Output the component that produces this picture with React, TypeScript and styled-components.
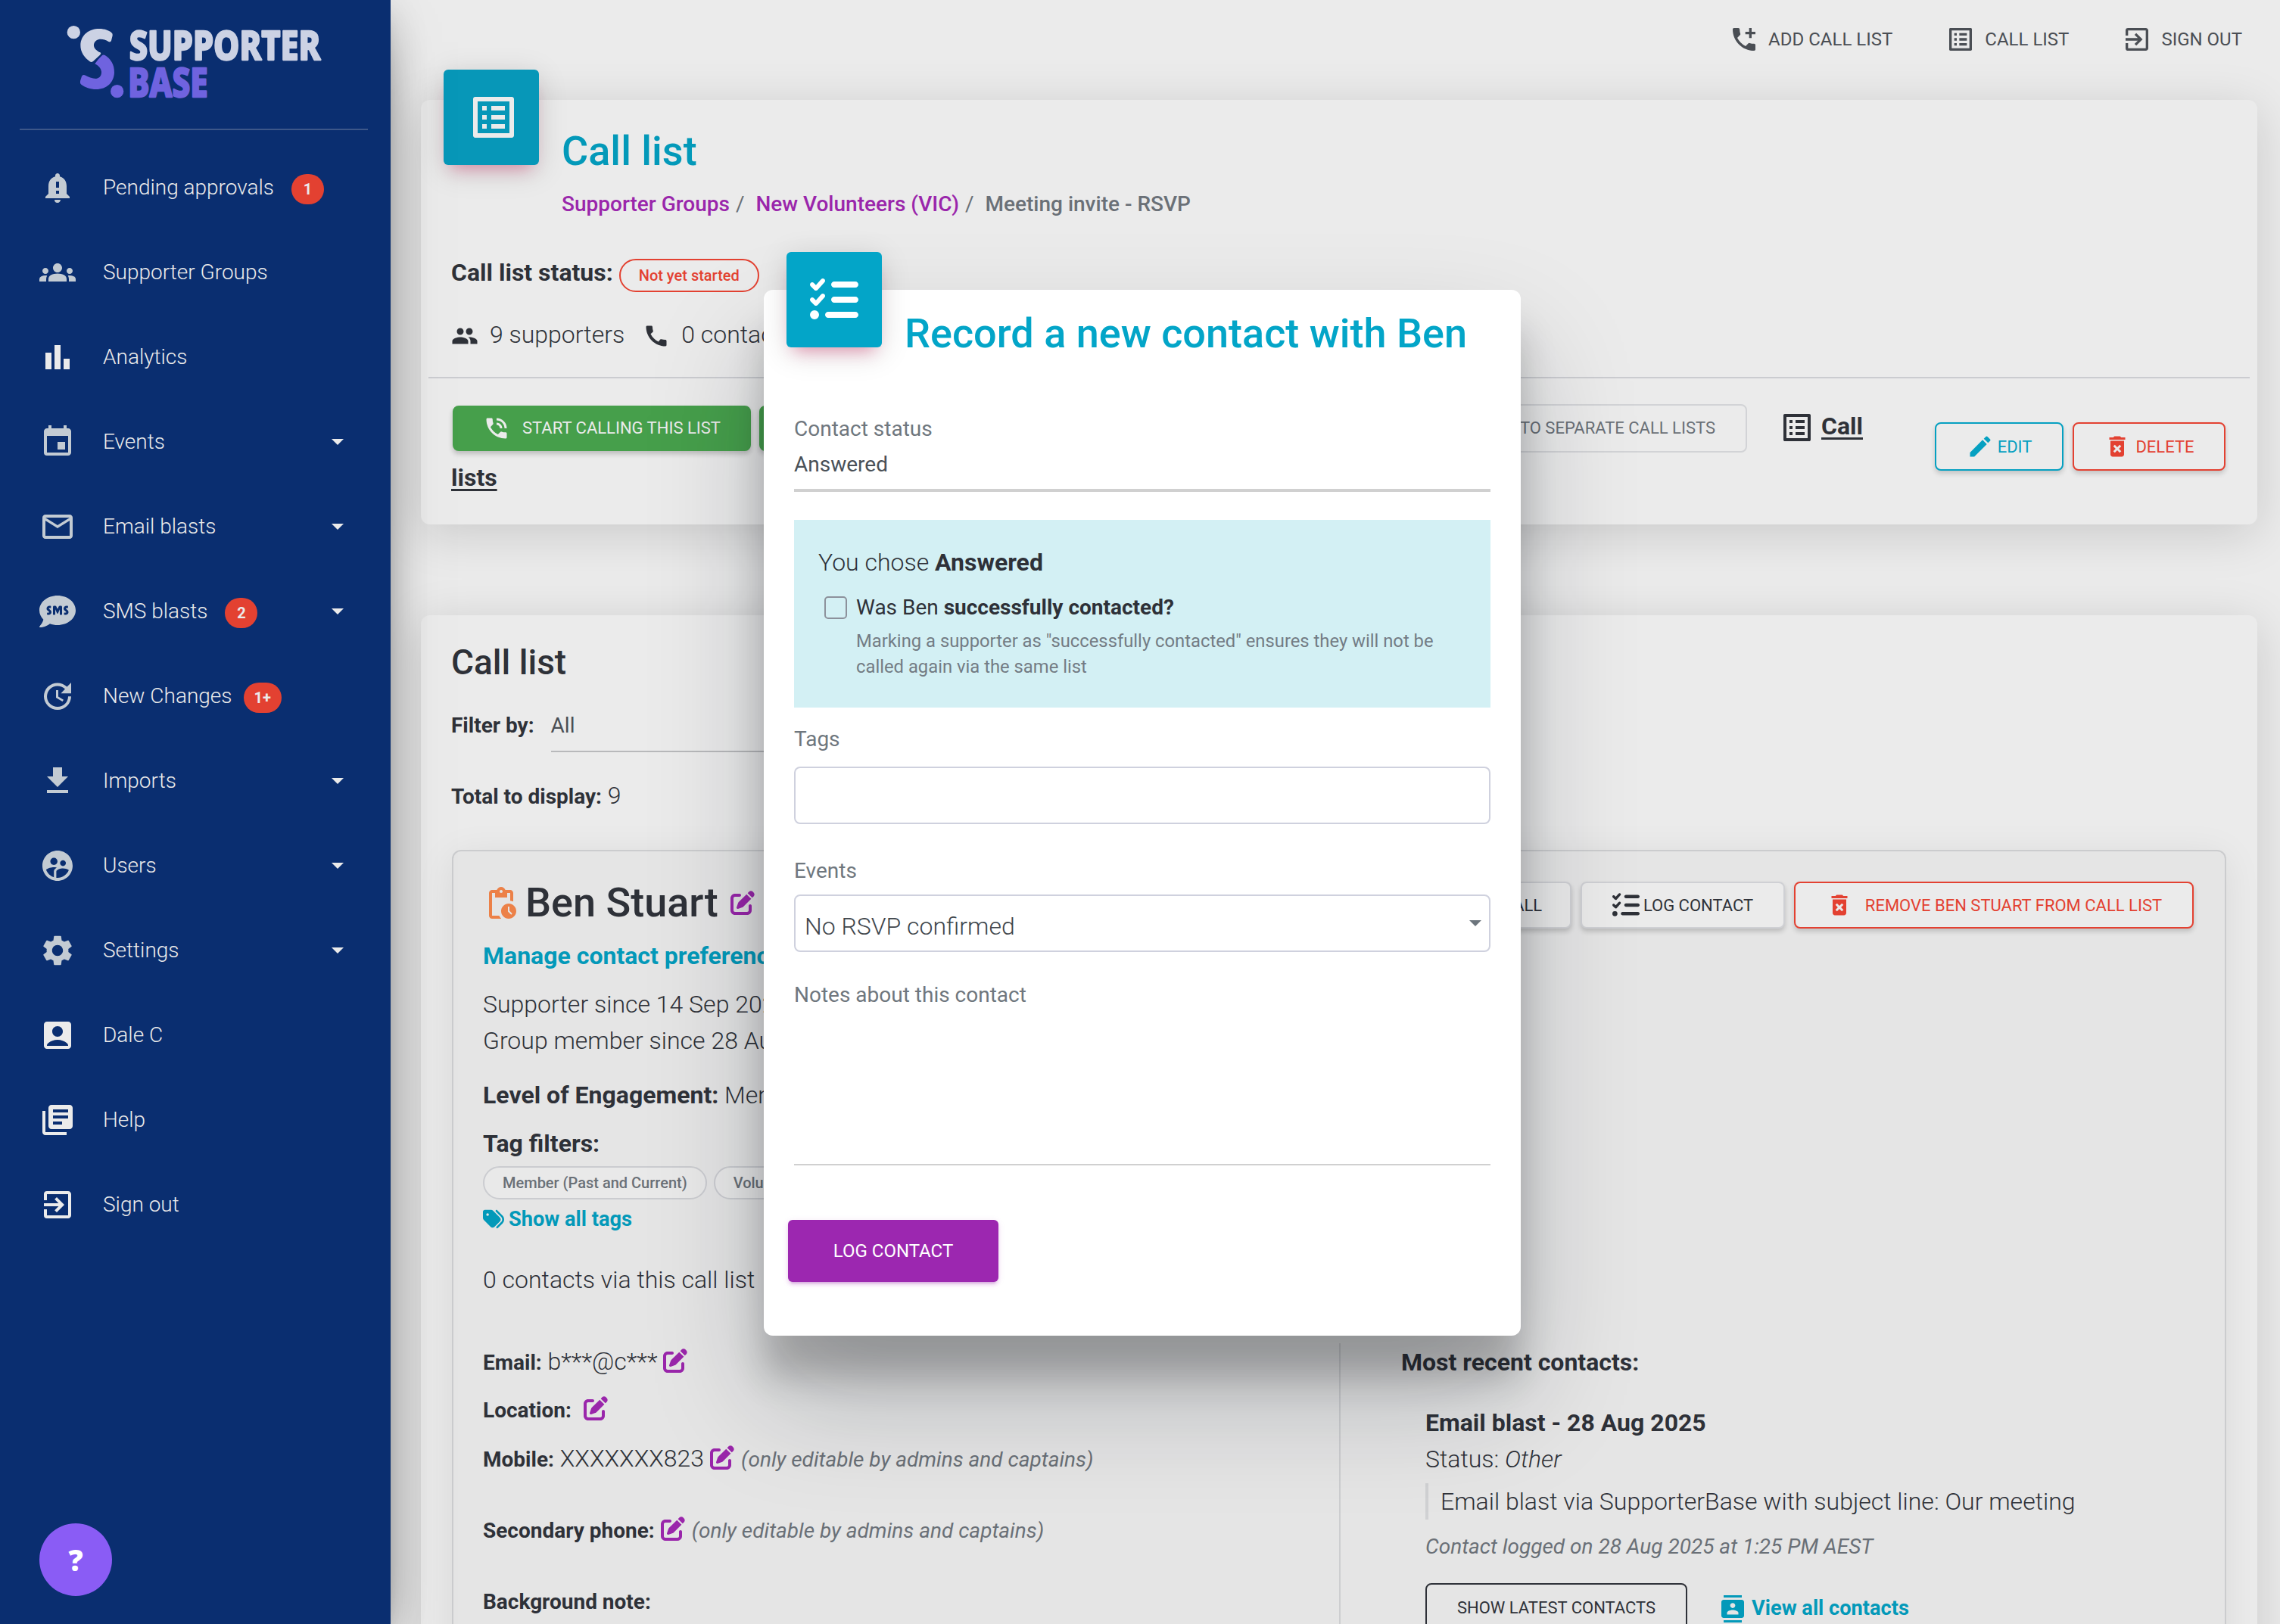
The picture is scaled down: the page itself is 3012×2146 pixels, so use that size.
import React from 'react';
import styled, { createGlobalStyle, css } from 'styled-components';
import {
  MdAccountBox,
  MdAddIcCall,
  MdBarChart,
  MdCall,
  MdContacts,
  MdDeleteForever,
  MdEdit,
  MdEvent,
  MdExitToApp,
  MdFileDownload,
  MdGroups,
  MdLibraryBooks,
  MdListAlt,
  MdMailOutline,
  MdNotificationImportant,
  MdPendingActions,
  MdPeople,
  MdPhoneInTalk,
  MdSettings,
  MdSupervisedUserCircle,
  MdUpdate,
} from 'react-icons/md';
import { FaSms } from 'react-icons/fa';
import { FaListCheck, FaPenToSquare, FaTags } from 'react-icons/fa6';

const color = {
  ink: '#2e3138',
  muted: '#6a7077',
  page: '#ebebeb',
  panel: '#e5e5e5',
  navy: '#0a2e70',
  cyan: '#0399b9',
  cyanBright: '#03a5c8',
  purple: '#9a26ab',
  red: '#e34131',
  green: '#469f4b',
  line: '#cbccd0',
};

const GlobalStyle = createGlobalStyle`
  * { box-sizing: border-box; }
  html, body { margin: 0; padding: 0; }
  body {
    background: ${color.page};
    color: ${color.ink};
    font-family: Roboto, "Liberation Sans", sans-serif;
    font-size: 32px;
    font-weight: 300;
    line-height: 48px;
    overflow: hidden;
  }
  svg { flex: none; display: block; }
`;

const Page = styled.div`
  display: grid;
  grid-template-columns: 516px 1fr;
  grid-template-rows: 2146px;
  width: 3012px;
  height: 2146px;
  overflow: hidden;
  position: relative;
`;

/* Sidebar */

const Sidebar = styled.aside`
  z-index: 2;
  background: ${color.navy};
  box-shadow: 0 32px 76px -24px rgba(0, 0, 0, 0.56), 0 8px 50px rgba(0, 0, 0, 0.12),
    0 16px 20px -10px rgba(0, 0, 0, 0.2);
  display: flex;
  flex-direction: column;
`;

const Brand = styled.div`
  margin: 0 30px 0 26px;
  height: 172px;
  padding: 16px 0 0 50px;
  border-bottom: 2px solid #3d5789;
`;

const Nav = styled.nav`
  padding-top: 20px;
`;

const NavItem = styled.a`
  display: flex;
  align-items: center;
  height: 112px;
  padding: 0 62px 0 52px;
  font-size: 28px;
  color: #ebebeb;
`;

const NavIcon = styled.span<{ $bright?: boolean }>`
  display: flex;
  font-size: 48px;
  width: 48px;
  margin-right: 36px;
  color: ${(p) => (p.$bright ? '#ebebeb' : '#c3cbd3')};
`;

const NavBadge = styled.span<{ $gap: number }>`
  height: 40px;
  min-width: 43px;
  margin: 3px 0 0 ${(p) => p.$gap}px;
  padding: 0 14px;
  border-radius: 20px;
  background: ${color.red};
  font-size: 20px;
  font-weight: 700;
  line-height: 40px;
  text-align: center;
`;

const Caret = styled.span<{ $color?: string }>`
  margin-left: auto;
  border: 8px solid transparent;
  border-top-color: ${(p) => p.$color ?? '#ebebeb'};
  border-bottom: 0;
`;

const HelpButton = styled.button`
  width: 96px;
  height: 96px;
  margin: auto 0 37px 52px;
  padding: 0;
  border: 0;
  border-radius: 50%;
  background: #8a5cf5;
  color: #fff;
  font: 900 38px 'Noto Sans', sans-serif;
`;

/* Shared pieces */

const Card = styled.section<{ $h: number; $mt?: number }>`
  height: ${(p) => p.$h}px;
  margin: ${(p) => p.$mt ?? 0}px 30px 0 40px;
  border-radius: 12px;
  background: ${color.page};
  box-shadow: 0 12px 64px rgba(0, 0, 0, 0.145);
`;

const Tile = styled.div<{ $bg: string; $lift: number }>`
  flex: none;
  width: 126px;
  height: 126px;
  margin: -${(p) => p.$lift}px 0 0 30px;
  border-radius: 6px;
  background: ${(p) => p.$bg};
  box-shadow: 0 8px 40px rgba(0, 0, 0, 0.14), 0 14px 20px -10px rgba(233, 30, 99, 0.4);
  display: flex;
  align-items: center;
  justify-content: center;
`;

const Line = styled.div<{ $mt?: number; $h?: number }>`
  height: ${(p) => p.$h ?? 48}px;
  margin-top: ${(p) => p.$mt ?? 0}px;
  line-height: ${(p) => p.$h ?? 48}px;
  white-space: nowrap;
`;

const FlexLine = styled(Line)`
  display: flex;
  align-items: center;
`;

const Strong = styled.span<{ $small?: boolean }>`
  font-weight: 700;
  ${(p) => p.$small && 'font-size: 28px;'}
`;

const Note = styled.em`
  font-size: 28px;
  font-weight: 400;
  color: ${color.muted};
`;

const TextLink = styled.a<{ $size?: number }>`
  font-size: ${(p) => p.$size ?? 27.2}px;
  font-weight: 700;
  color: ${color.cyan};
`;

type Tone = 'green' | 'ghost' | 'plain' | 'cyan' | 'red' | 'dark';

const tones: Record<Tone, ReturnType<typeof css>> = {
  green: css`
    background: ${color.green};
    border-color: ${color.green};
    color: #ebebeb;
    box-shadow: 0 4px 6px rgba(0, 0, 0, 0.2);
  `,
  ghost: css`
    border-color: #d2d3d6;
    color: ${color.muted};
  `,
  plain: css`
    background: ${color.page};
    border-color: #cfd0d4;
    color: ${color.ink};
    box-shadow: 0 4px 6px rgba(0, 0, 0, 0.18);
  `,
  cyan: css`
    border-color: #05a0c1;
    color: #05a0c1;
    background: ${color.page};
    box-shadow: 0 4px 6px rgba(0, 0, 0, 0.16);
  `,
  red: css`
    border-color: ${color.red};
    color: ${color.red};
    background: ${color.page};
    box-shadow: 0 4px 6px rgba(0, 0, 0, 0.16);
  `,
  dark: css`
    border-color: ${color.ink};
    color: ${color.ink};
  `,
};

const Button = styled.button<{ $tone: Tone; $w: number; $h?: number; $gap?: number }>`
  display: flex;
  align-items: center;
  justify-content: center;
  gap: ${(p) => p.$gap ?? 8}px;
  flex: none;
  width: ${(p) => p.$w}px;
  height: ${(p) => p.$h ?? 64}px;
  padding: 0;
  border: 2px solid;
  border-radius: 8px;
  background: transparent;
  font: 400 22px Roboto, sans-serif;
  text-transform: uppercase;
  white-space: nowrap;
  ${(p) => tones[p.$tone]}
`;

/* Main column */

const Main = styled.main`
  min-width: 0;
`;

const TopBar = styled.header`
  display: flex;
  justify-content: flex-end;
  align-items: center;
  gap: 70px;
  height: 104px;
  margin-bottom: 28px;
  padding-right: 50px;
`;

const TopLink = styled.a`
  display: flex;
  align-items: center;
  gap: 12px;
  font-size: 24px;
  font-weight: 400;
  text-transform: uppercase;
  color: #4a4e54;
  svg { font-size: 40px; }
`;

const CardHead = styled.div`
  display: flex;
`;

const HeadText = styled.div`
  padding: 36px 0 0 30px;
`;

const Title = styled.h1`
  margin: 0;
  font-size: 54px;
  font-weight: 500;
  line-height: 64px;
  color: ${color.cyan};
`;

const Crumbs = styled.div`
  display: flex;
  margin-top: 18px;
  font-size: 28px;
  font-weight: 500;
  line-height: 40px;
  color: ${color.muted};
`;

const Crumb = styled.a`
  color: ${color.purple};
`;

const Slash = styled.span`
  margin: 0 15px 0 8px;
  font-weight: 400;
`;

const Inset = styled.div`
  padding-left: 40px;
`;

const StatusPill = styled.span`
  height: 44px;
  margin: 8px 0 0 8px;
  padding: 0 24px;
  border: 2px solid ${color.red};
  border-radius: 22px;
  color: ${color.red};
  font-size: 20px;
  font-weight: 500;
  line-height: 41px;
`;

const Stat = styled.span`
  display: flex;
  align-items: center;
  margin-right: 24px;
  svg { margin: 3px 15px 0 0; font-size: 36px; }
`;

const Rule = styled.hr`
  margin: 36px 10px 0;
  border: 0;
  height: 2px;
  background: ${color.line};
`;

const ActionArea = styled.div`
  display: flex;
  justify-content: space-between;
  padding: 33px 42px 0 40px;
`;

const ActionRow = styled.div`
  display: flex;
  align-items: center;
  height: 64px;
`;

const CallButtons = styled.div`
  display: flex;
  align-items: center;
  gap: 11px;
  width: 1712px;
  padding: 1px 0 0 2px;
`;

const PushRight = styled.div`
  margin-left: auto;
`;

const ListsLink = styled.a`
  margin-top: -5px;
  font-size: 32px;
  font-weight: 700;
  text-decoration: underline;
  text-decoration-thickness: 3px;
  text-underline-offset: 4px;
`;

const ListsIcon = styled.span`
  margin: 0 8px 0 42px;
  font-size: 48px;
`;

const CardButtons = styled.div`
  display: flex;
  gap: 12px;
  padding-top: 25px;
`;

const SectionTitle = styled.h2`
  margin: 0;
  padding-top: 32px;
  font-size: 46px;
  font-weight: 500;
  line-height: 60px;
`;

const FilterRow = styled.div`
  display: flex;
  margin-top: 29px;
  line-height: 49px;
  font-size: 28px;
`;

const FilterSelect = styled.div`
  width: 600px;
  height: 60px;
  margin-left: 22px;
  border-bottom: 2px solid #b8b9bb;
  font-weight: 400;
  color: #4a4e54;
`;

const SupporterPanel = styled.div`
  height: 1100px;
  margin: 48px 41px 0 41px;
  padding: 38px 41px 0 39px;
  border: 2px solid #cbccce;
  border-radius: 12px;
  background: ${color.panel};
  box-shadow: 0 8px 50px rgba(0, 0, 0, 0.08);
`;

const PanelTop = styled.div`
  display: flex;
  justify-content: space-between;
`;

const PanelButtons = styled.div`
  display: flex;
  gap: 12px;
  padding-top: 2px;
`;

const Name = styled.h2`
  display: flex;
  align-items: center;
  margin: 0;
  font-size: 54px;
  font-weight: 500;
  line-height: 60px;
`;

const NameIcon = styled.span`
  margin: 2px 8px 0 0;
  font-size: 48px;
  color: #ec8148;
`;

const EditIcon = styled(FaPenToSquare)<{ $ml?: number }>`
  display: inline-block;
  margin: 0 9px 0 ${(p) => p.$ml ?? 8}px;
  font-size: 32px;
  color: ${color.purple};
  vertical-align: -4px;
`;

const Chips = styled.div`
  display: flex;
  gap: 9px;
  margin-top: 6px;
`;

const Chip = styled.span`
  height: 44px;
  padding: 0 24px;
  border: 2px solid ${color.line};
  border-radius: 22px;
  background: #e9e9e9;
  color: ${color.muted};
  font-size: 20px;
  font-weight: 500;
  line-height: 40px;
`;

const Details = styled.div`
  display: grid;
  grid-template-columns: 1131px 1fr;
  margin-top: 60px;
  height: 400px;
`;

const Recent = styled.div`
  padding: 1px 0 0 80px;
  border-left: 2px solid #cdced0;
`;

const ContactEntry = styled.div`
  padding-left: 32px;
`;

const Quote = styled.blockquote`
  margin: 8px 0 0;
  padding-left: 16px;
  border-left: 4px solid #d0d1d3;
`;

const EntryActions = styled.div`
  display: flex;
  align-items: center;
  margin-top: 30px;
  svg { margin: 4px 7px 0 42px; font-size: 36px; color: ${color.cyan}; }
`;

const EntryLink = styled(TextLink)`
  padding-top: 2px;
`;

/* Record-contact dialog */

const Dialog = styled.div`
  position: absolute;
  z-index: 3;
  left: 1009px;
  top: 383px;
  width: 1000px;
  height: 1382px;
  border-radius: 12px;
  background: #fff;
  box-shadow: 0 54px 48px rgba(0, 0, 0, 0.2), 0 80px 154px rgba(10, 16, 30, 0.23);
`;

const DialogTitle = styled(Title)`
  margin: 26px 0 0 30px;
  color: ${color.cyanBright};
  white-space: nowrap;
`;

const DialogBody = styled.form`
  padding: 0 40px;
  font-size: 28px;
  font-weight: 400;
`;

const Label = styled.label<{ $mt: number }>`
  display: block;
  margin-top: ${(p) => p.$mt}px;
  line-height: 42px;
  color: #6f777e;
`;

const StatusSelect = styled.div`
  height: 56px;
  margin-top: 6px;
  border-bottom: 4px solid #d0d0d0;
  line-height: 39px;
  color: #495057;
`;

const Outcome = styled.div`
  height: 248px;
  margin-top: 37px;
  padding: 32px 32px 0;
  background: #d3f0f4;
`;

const OutcomeLead = styled.p`
  margin: 0;
  font-size: 32px;
  font-weight: 300;
  line-height: 48px;
`;

const Question = styled.div`
  display: flex;
  align-items: center;
  margin: 16px 0 7px 8px;
  line-height: 40px;
  white-space: pre;
`;

const Checkbox = styled.span`
  width: 30px;
  height: 30px;
  margin-right: 12px;
  border: 2px solid #8c919b;
  border-radius: 5px;
`;

const Hint = styled.p`
  margin: 0 0 0 50px;
  font-size: 23.8px;
  line-height: 34px;
  color: #737c84;
`;

const Field = styled.div<{ $mt: number }>`
  display: flex;
  align-items: center;
  height: 76px;
  margin-top: ${(p) => p.$mt}px;
  padding: 0 10px 0 12px;
  border: 2px solid #cfd1de;
  border-radius: 8px;
  font-size: 32px;
  font-weight: 300;
  color: #40464c;
`;

const FieldText = styled.span`
  padding-top: 8px;
`;

const NotesArea = styled.div`
  height: 204px;
  border-bottom: 2px solid #d0d0d0;
`;

const Submit = styled.button`
  width: 278px;
  height: 82px;
  margin: 72px 0 0 -8px;
  border: 0;
  border-radius: 6px;
  background: #9c27b0;
  box-shadow: 0 4px 4px rgba(156, 39, 176, 0.14), 0 6px 2px -4px rgba(156, 39, 176, 0.2),
    0 2px 10px rgba(156, 39, 176, 0.12);
  color: #fff;
  font: 400 24px Roboto, sans-serif;
  text-transform: uppercase;
`;

const Logo = () => (
  <svg width="360" height="130" viewBox="0 0 1080 390" overflow="visible">
    <g fill="#ccd2e4">
      <circle cx="64" cy="80" r="26" />
      <path d="M165 66C188 66 203 73 213 80Q220 85 218 93L213 113Q210 121 202 117C190 110 176 106 164 108C150 111 143 122 144 134C146 146 157 154 169 160Q175 163 168 170L141 195Q135 200 128 196C108 182 90 160 91 130C93 90 125 66 165 66Z" />
    </g>
    <g fill="#6f63df">
      <circle cx="236" cy="314" r="26" />
      <path d="M188 171C209 183 226 207 225 240C223 280 195 306 153 306C130 306 108 298 94 287Q88 282 90 273L96 254Q100 246 108 250C122 258 137 264 153 264C168 261 175 250 174 236C172 222 163 213 148 205Q162 184 175 173Q181 167 188 171Z" />
    </g>
    <g fontFamily="'Noto Sans', 'Open Sans', sans-serif" fontWeight="800" fontSize="160" strokeLinejoin="round" strokeWidth="7">
      <text x="284" y="188" textLength="758" lengthAdjust="spacingAndGlyphs" fill="#ccd2e4" stroke="#ccd2e4">SUPPORTER</text>
      <text x="280" y="335" textLength="316" lengthAdjust="spacingAndGlyphs" fill="#6f63df" stroke="#6f63df">BASE</text>
    </g>
  </svg>
);

interface NavEntry {
  label: string;
  icon: React.ReactNode;
  bright?: boolean;
  badge?: string;
  badgeGap?: number;
  expandable?: boolean;
}

const navEntries: NavEntry[] = [
  { label: 'Pending approvals', icon: <MdNotificationImportant />, badge: '1', badgeGap: 23 },
  { label: 'Supporter Groups', icon: <MdGroups /> },
  { label: 'Analytics', icon: <MdBarChart />, bright: true },
  { label: 'Events', icon: <MdEvent />, expandable: true },
  { label: 'Email blasts', icon: <MdMailOutline />, expandable: true },
  { label: 'SMS blasts', icon: <FaSms />, badge: '2', badgeGap: 23, expandable: true },
  { label: 'New Changes', icon: <MdUpdate />, badge: '1+', badgeGap: 15 },
  { label: 'Imports', icon: <MdFileDownload />, expandable: true },
  { label: 'Users', icon: <MdSupervisedUserCircle />, expandable: true },
  { label: 'Settings', icon: <MdSettings />, expandable: true },
  { label: 'Dale C', icon: <MdAccountBox />, bright: true },
  { label: 'Help', icon: <MdLibraryBooks />, bright: true },
  { label: 'Sign out', icon: <MdExitToApp />, bright: true },
];

const SideNav = () => (
  <Sidebar>
    <Brand>
      <Logo />
    </Brand>
    <Nav>
      {navEntries.map((entry) => (
        <NavItem key={entry.label}>
          <NavIcon $bright={entry.bright}>{entry.icon}</NavIcon>
          {entry.label}
          {entry.badge && <NavBadge $gap={entry.badgeGap ?? 16}>{entry.badge}</NavBadge>}
          {entry.expandable && <Caret />}
        </NavItem>
      ))}
    </Nav>
    <HelpButton>?</HelpButton>
  </Sidebar>
);

const SummaryCard = () => (
  <Card $h={561}>
    <CardHead>
      <Tile $bg="#0797b8" $lift={40}>
        <MdListAlt size={72} color="#ebebeb" style={{ marginLeft: 6 }} />
      </Tile>
      <HeadText>
        <Title>Call list</Title>
        <Crumbs>
          <Crumb>Supporter Groups</Crumb>
          <Slash>/</Slash>
          <Crumb>New Volunteers (VIC)</Crumb>
          <Slash>/</Slash>
          Meeting invite - RSVP
        </Crumbs>
      </HeadText>
    </CardHead>
    <Inset>
      <FlexLine $mt={50} $h={40}>
        <Strong>Call list status:</Strong>
        <StatusPill>Not yet started</StatusPill>
      </FlexLine>
      <FlexLine $mt={42} $h={40}>
        <Stat>
          <MdPeople />9 supporters
        </Stat>
        <Stat>
          <MdCall />0 contacts
        </Stat>
      </FlexLine>
    </Inset>
    <Rule />
    <ActionArea>
      <div>
        <ActionRow>
          <CallButtons>
            <Button $tone="green" $w={394} $h={60} $gap={16}>
              <MdPhoneInTalk size={36} />
              Start calling this list
            </Button>
            <Button $tone="green" $w={394} $h={60}>
              Share this list
            </Button>
            <PushRight>
              <Button $tone="ghost" $w={426}>
                Split into separate call lists
              </Button>
            </PushRight>
          </CallButtons>
          <ListsIcon>
            <MdListAlt />
          </ListsIcon>
          <ListsLink>Call</ListsLink>
        </ActionRow>
        <Line $mt={10}>
          <ListsLink>lists</ListsLink>
        </Line>
      </div>
      <CardButtons>
        <Button $tone="cyan" $w={170} $gap={5}>
          <MdEdit size={36} />
          Edit
        </Button>
        <Button $tone="red" $w={202} $gap={6}>
          <MdDeleteForever size={36} />
          Delete
        </Button>
      </CardButtons>
    </ActionArea>
  </Card>
);

const SupporterCard = () => (
  <Card $h={1500} $mt={120}>
    <Inset>
      <SectionTitle>Call list</SectionTitle>
      <FilterRow>
        <Strong $small>Filter by:</Strong>
        <FilterSelect>All</FilterSelect>
      </FilterRow>
      <Line $mt={33}>
        <Strong $small>Total to display:</Strong> 9
      </Line>
    </Inset>
    <SupporterPanel>
      <PanelTop>
        <div>
          <Name>
            <NameIcon>
              <MdPendingActions />
            </NameIcon>
            Ben Stuart
            <EditIcon $ml={16} />
          </Name>
          <Line $mt={16}>
            <TextLink $size={32}>Manage contact preferences</TextLink>
          </Line>
          <Line $mt={16}>Supporter since 14 Sep 2021</Line>
          <Line>Group member since 28 Aug 2025</Line>
          <Line $mt={24}>
            <Strong>Level of Engagement:</Strong> Member
          </Line>
          <Line $mt={16}>
            <Strong>Tag filters:</Strong>
          </Line>
          <Chips>
            <Chip>Member (Past and Current)</Chip>
            <Chip>Volunteer</Chip>
          </Chips>
          <FlexLine $mt={6} $h={40}>
            <FaTags size={28} color={color.cyan} style={{ marginRight: 6 }} />
            <TextLink>Show all tags</TextLink>
          </FlexLine>
          <Line $mt={36}>0 contacts via this call list</Line>
        </div>
        <PanelButtons>
          <Button $tone="plain" $w={130} $h={62}>
            Call
          </Button>
          <Button $tone="plain" $w={270} $h={62} $gap={5}>
            <FaListCheck size={36} />
            Log contact
          </Button>
          <Button $tone="red" $w={528} $h={62} $gap={16}>
            <MdDeleteForever size={36} />
            Remove Ben Stuart from call list
          </Button>
        </PanelButtons>
      </PanelTop>
      <Details>
        <div>
          <Line>
            <Strong $small>Email:</Strong> b***@c***
            <EditIcon />
          </Line>
          <Line $mt={15}>
            <Strong $small>Location:</Strong>
            <EditIcon $ml={16} />
          </Line>
          <Line $mt={17}>
            <Strong $small>Mobile:</Strong> XXXXXXX823
            <EditIcon />
            <Note>(only editable by admins and captains)</Note>
          </Line>
          <Line $mt={46}>
            <Strong $small>Secondary phone:</Strong>
            <EditIcon />
            <Note>(only editable by admins and captains)</Note>
          </Line>
          <Line $mt={46}>
            <Strong $small>Background note:</Strong>
          </Line>
        </div>
        <Recent>
          <Line>
            <Strong>Most recent contacts:</Strong>
          </Line>
          <ContactEntry>
            <Line $mt={32}>
              <Strong>Email blast - 28 Aug 2025</Strong>
            </Line>
            <Line>
              Status: <em>Other</em>
            </Line>
            <Quote>Email blast via SupporterBase with subject line: Our meeting</Quote>
            <Line $mt={14} $h={40}>
              <Note>Contact logged on 28 Aug 2025 at 1:25 PM AEST</Note>
            </Line>
            <EntryActions>
              <Button $tone="dark" $w={346}>
                Show latest contacts
              </Button>
              <MdContacts />
              <EntryLink>View all contacts</EntryLink>
            </EntryActions>
          </ContactEntry>
        </Recent>
      </Details>
    </SupporterPanel>
  </Card>
);

const RecordContactDialog = () => (
  <Dialog role="dialog">
    <CardHead>
      <Tile $bg="#03a5c8" $lift={50}>
        <FaListCheck size={64} color="#fff" />
      </Tile>
      <DialogTitle>Record a new contact with Ben</DialogTitle>
    </CardHead>
    <DialogBody>
      <Label $mt={73}>Contact status</Label>
      <StatusSelect>Answered</StatusSelect>
      <Outcome>
        <OutcomeLead>
          You chose <Strong>Answered</Strong>
        </OutcomeLead>
        <Question>
          <Checkbox />
          Was Ben <Strong>successfully contacted?</Strong>
        </Question>
        <Hint>
          Marking a supporter as "successfully contacted" ensures they will not be called again via the
          same list
        </Hint>
      </Outcome>
      <Label $mt={21}>Tags</Label>
      <Field $mt={15} />
      <Label $mt={41}>Events</Label>
      <Field $mt={10}>
        <FieldText>No RSVP confirmed</FieldText>
        <Caret $color="#6c757d" />
      </Field>
      <Label $mt={36}>Notes about this contact</Label>
      <NotesArea />
      <Submit type="button">Log contact</Submit>
    </DialogBody>
  </Dialog>
);

export default function App() {
  return (
    <>
      <GlobalStyle />
      <Page>
        <SideNav />
        <Main>
          <TopBar>
            <TopLink>
              <MdAddIcCall />
              Add call list
            </TopLink>
            <TopLink>
              <MdListAlt />
              Call list
            </TopLink>
            <TopLink>
              <MdExitToApp />
              Sign out
            </TopLink>
          </TopBar>
          <SummaryCard />
          <SupporterCard />
        </Main>
        <RecordContactDialog />
      </Page>
    </>
  );
}
